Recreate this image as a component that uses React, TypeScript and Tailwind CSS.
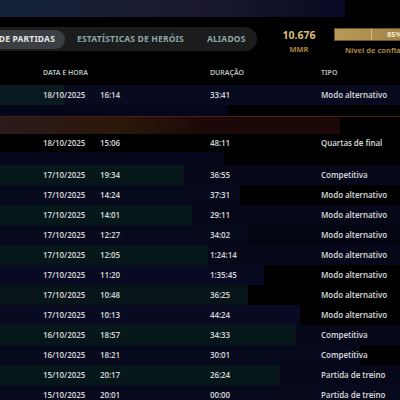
import React from 'react';

type Match = { date: string; time: string; duration: string; type: string; bg: string };

const matches: Match[] = [
  { date: '17/10/2025', time: '19:34', duration: '36:55', type: 'Competitiva', bg: 'bg-linear-to-r from-[#061719] from-46% to-[#06081a] to-46% ' },
  { date: '17/10/2025', time: '14:24', duration: '37:31', type: 'Modo alternativo', bg: 'bg-linear-to-r from-[#07091c] from-60% to-[#000000] to-60%' },
  { date: '17/10/2025', time: '14:01', duration: '29:11', type: 'Modo alternativo', bg: 'bg-linear-to-r from-[#061719] from-48% to-[#06081a] to-48%' },
  { date: '17/10/2025', time: '12:27', duration: '34:02', type: 'Modo alternativo', bg: 'bg-linear-to-r from-[#07091c] from-62% to-[#040512] to-62%' },
  { date: '17/10/2025', time: '12:05', duration: '1:24:14', type: 'Modo alternativo', bg: 'bg-linear-to-r from-[#061719] from-52% to-[#06081a] to-52%' },
  { date: '17/10/2025', time: '11:20', duration: '1:35:45', type: 'Modo alternativo', bg: 'bg-linear-to-r from-[#080a22] from-66% to-[#000000] to-66%' },
  { date: '17/10/2025', time: '10:48', duration: '36:25', type: 'Modo alternativo', bg: 'bg-linear-to-r from-[#071418] from-62% to-[#000000] to-62%' },
  { date: '17/10/2025', time: '10:13', duration: '44:24', type: 'Modo alternativo', bg: 'bg-linear-to-r from-[#080a22] from-75% to-[#000000] to-75%' },
  { date: '16/10/2025', time: '18:57', duration: '34:33', type: 'Competitiva', bg: 'bg-linear-to-r from-[#061719] from-74% to-[#06081a] to-74%' },
  { date: '16/10/2025', time: '18:21', duration: '30:01', type: 'Competitiva', bg: 'bg-linear-to-r from-[#07091c] from-90% to-[#000000] to-90%' },
  { date: '15/10/2025', time: '20:17', duration: '26:24', type: 'Partida de treino', bg: 'bg-linear-to-r from-[#061719] from-70% to-[#06081a] to-70%' },
  { date: '15/10/2025', time: '20:01', duration: '00:00', type: 'Partida de treino', bg: 'bg-[#07091c]' },
];

function Row({ m, bg, h = 'h-[20px]' }: { m: Match | null; bg: string; h?: string }) {
  return (
    <div className={`${h} ${bg} flex items-center pl-[43px] text-[8px] font-semibold text-[#cdd0d0] tracking-[-0.01em]`}>
      {m && (
        <>
          <span className="w-[57px]">{m.date}</span>
          <span className="w-[110px]">{m.time}</span>
          <span className="w-[111px]">{m.duration}</span>
          <span>{m.type}</span>
        </>
      )}
    </div>
  );
}

export default function App() {
  return (
    <div className="w-[400px] h-[400px] overflow-hidden bg-black" style={{ fontFamily: '"Noto Sans", sans-serif' }}>
      <div className="h-[17px] w-[345px] bg-linear-to-r from-[#13233a] via-[#1b1a30] via-55% to-[#070a22]" />

      <div className="mt-[10px] h-[24px] flex items-start">
        <div className="shrink-0 w-[257px] h-[24px] bg-[#1b1c1d] rounded-r-full flex items-center">
          <div className="shrink-0 w-[65px] h-[19px] bg-[#3b3f43] rounded-r-full overflow-hidden flex items-center justify-end pr-[10px]">
            <span className="whitespace-nowrap text-[8.5px] font-bold text-[#e2e6e6] tracking-[0.02em]">HISTÓRICO DE PARTIDAS</span>
          </div>
          <span className="ml-[12px] text-[8.5px] font-bold text-[#8ea5a5] tracking-[0.02em] whitespace-nowrap">ESTATÍSTICAS DE HERÓIS</span>
          <span className="ml-[23px] text-[8.5px] font-bold text-[#8ea5a5] tracking-[0.02em]">ALIADOS</span>
        </div>

        <div className="shrink-0 ml-[26px] w-[32px] flex flex-col items-center">
          <span className="text-[10.5px] font-bold text-[#d8bc7a] leading-[14px] mt-[1px]">10.676</span>
          <span className="text-[7.5px] font-bold text-[#a8843f] leading-[10px] mt-[2px]">MMR</span>
        </div>

        <div className="shrink-0 ml-[19px] flex flex-col">
          <div className="w-[90px] h-[13px] mt-[1px] border border-[#6b5428] bg-linear-to-r from-[#b89a58] to-[#9c7d40] flex items-center">
            <div className="w-[37px] h-full border-r border-[#d6c08a]" />
            <span className="ml-[15px] text-[7.5px] font-bold text-[#f2ead6]">85%</span>
          </div>
          <span className="ml-[11px] mt-[4px] text-[7.5px] font-bold text-[#a8843f] leading-[10px] whitespace-nowrap">Nível de confiança</span>
        </div>
      </div>

      <div className="mt-[15px] h-[14px] flex items-center pl-[43px] text-[7px] font-semibold text-[#b9c2c2]">
        <span className="w-[167px]">DATA E HORA</span>
        <span className="w-[111px]">DURAÇÃO</span>
        <span>TIPO</span>
      </div>

      <div className="mt-[5px]">
        <Row
          m={{ date: '18/10/2025', time: '16:14', duration: '33:41', type: 'Modo alternativo', bg: '' }}
          bg="bg-linear-to-r from-[#0a1a21] from-16% via-[#080a20] via-16% to-[#080a20] to-57%"
        />
        <div className="h-[11px] bg-linear-to-r from-[#05061a] from-57% to-[#000000] to-57%" />
        <div className="h-[18px] border-t border-[#4a2016] bg-linear-to-r from-[#2c1a1c] from-0% via-[#2a1808] via-30% to-[#1c0808] to-52%">
          <div className="h-full w-[400px] bg-linear-to-r from-transparent from-85% to-[#000000] to-85%" />
        </div>
        <Row
          m={{ date: '18/10/2025', time: '15:06', duration: '48:11', type: 'Quartas de final', bg: '' }}
          bg="bg-black"
          h="h-[18px]"
        />
        <div className="h-[13px] bg-linear-to-r from-[#06071a] from-56% to-[#000000] to-56%" />
        {matches.map((m, i) => (
          <Row key={i} m={m} bg={m.bg} />
        ))}
      </div>
    </div>
  );
}
